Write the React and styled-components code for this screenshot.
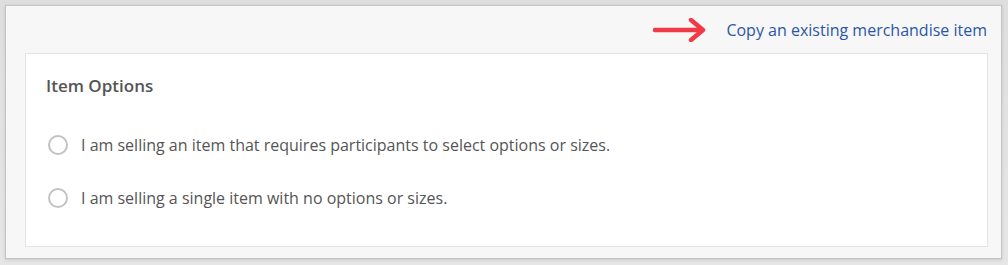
import React from 'react';
import styled, { createGlobalStyle } from 'styled-components';

const GlobalStyle = createGlobalStyle`
  html, body {
    margin: 0;
    padding: 0;
  }
  body {
    background: linear-gradient(180deg, #dedede 0%, #e6e6e6 100%);
    font-family: "Open Sans", "Liberation Sans", sans-serif;
    width: 1008px;
    height: 265px;
    overflow: hidden;
  }
`;

const Frame = styled.div`
  padding: 5px 6px 6px 5px;
  box-sizing: border-box;
  width: 1008px;
  height: 265px;
`;

const Panel = styled.div`
  box-sizing: border-box;
  height: 100%;
  background: #f7f7f7;
  border: 1px solid #c4c4c4;
  box-shadow: 0 1px 3px rgba(0, 0, 0, 0.12);
  padding: 0 13px 11px 19px;
  display: flex;
  flex-direction: column;
`;

const Header = styled.div`
  height: 47px;
  display: flex;
  align-items: center;
  justify-content: flex-end;
  gap: 19px;
  padding-right: 1px;
`;

const Link = styled.a`
  color: #2b56a8;
  font-size: 16px;
  text-decoration: none;
  cursor: pointer;
  line-height: 20px;
`;

const Card = styled.div`
  flex: 1;
  background: #ffffff;
  border: 1px solid #e4e4e4;
  padding: 20px 20px 0 20px;
`;

const Title = styled.h3`
  margin: 0 0 20px 0;
  font-size: 17px;
  font-weight: 600;
  color: #555555;
  line-height: 24px;
`;

const Option = styled.label`
  display: flex;
  align-items: center;
  gap: 13px;
  height: 53px;
  color: #555555;
  font-size: 16px;
  cursor: pointer;
`;

const Radio = styled.span`
  box-sizing: border-box;
  width: 20px;
  height: 20px;
  margin-left: 2px;
  border-radius: 50%;
  border: 2px solid #c2c2c2;
  background: #fff;
  flex-shrink: 0;
`;

const Arrow = () => (
  <svg width="54" height="24" viewBox="0 0 54 24" fill="none">
    <path
      d="M2 12 H49 M38 2 L50 12 L38 22"
      stroke="#f23a46"
      strokeWidth="4.5"
      strokeLinecap="round"
      strokeLinejoin="round"
    />
  </svg>
);

export default function App() {
  return (
    <>
      <GlobalStyle />
      <Frame>
        <Panel>
          <Header>
            <Arrow />
            <Link>Copy an existing merchandise item</Link>
          </Header>
          <Card>
            <Title>Item Options</Title>
            <Option>
              <Radio />
              I am selling an item that requires participants to select options or sizes.
            </Option>
            <Option>
              <Radio />
              I am selling a single item with no options or sizes.
            </Option>
          </Card>
        </Panel>
      </Frame>
    </>
  );
}
